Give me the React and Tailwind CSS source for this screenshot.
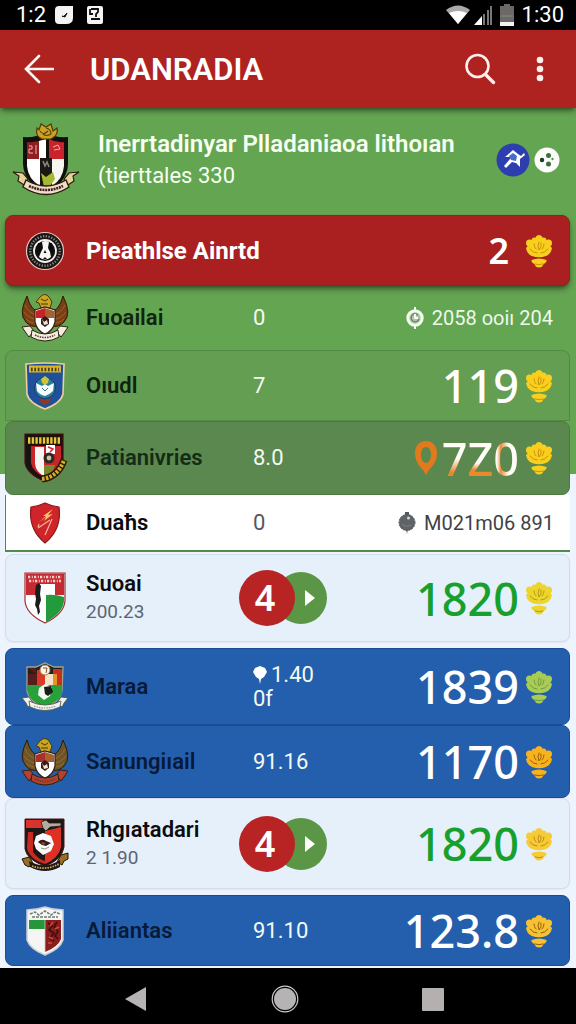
import clsx from "clsx"

/* ---------- small icons ---------- */

function Trophy({ fill = "#f9cf1d", line = "#c98f0c" }) {
  return (
    <svg viewBox="0 0 28 34" className="h-[34px] w-7 shrink-0" fill={fill} strokeLinejoin="round" strokeLinecap="round">
      <path d="M1 14q2-3 5-2 0-5 4-5 0-6 4-6t4 6q4 0 4 5 3-1 5 2-1 6-6 8-7 2.500-14 0-5-2-6-8z" />
      <circle cx="4.500" cy="9" r="3.500" />
      <circle cx="23.500" cy="9" r="3.500" />
      <circle cx="9.500" cy="6.500" r="3" />
      <circle cx="18.500" cy="6.500" r="3" />
      <path d="M6.500 26q7.500-3 15 0 .5 2.500-3 4-1 3.500-4.500 3.500T9.500 30Q6 28.500 6.500 26z" />
      <path d="M5 15q3 4 7 4M23 15q-3 4-7 4M14 8q-2 4 0 8 3-3 2-7M9 10q0 3 2 5M19 10q0 3-2 5M10 30q4 1.500 8 0" fill="none" stroke={line} strokeWidth="1" />
    </svg>
  )
}

function MetaIcon({ dark }) {
  if (dark) {
    return (
      <svg viewBox="0 0 18 22" className="h-[22px] w-[18px]">
        <path d="M7 0h4v4H7zM8 17h2l-1 5z" fill="#55595c" />
        <circle cx="9" cy="10.500" r="8" fill="#5f6366" stroke="#4c5053" strokeWidth="1" strokeDasharray="2 1" />
        <circle cx="10.500" cy="6" r="1.500" fill="#d5d7d8" />
        <path d="M4 12q4 4 9 1" stroke="#7d8184" fill="none" />
      </svg>
    )
  }
  return (
    <svg viewBox="0 0 18 22" className="h-[22px] w-[18px]">
      <path d="M8 0h2v3H8zM8 19h2v3H8z" fill="#f4fbf1" />
      <circle cx="9" cy="11" r="7.200" fill="#a9c8a0" stroke="#f4fbf1" strokeWidth="3" />
      <path d="M12 8A4 4 0 1 0 13 12" fill="none" stroke="#68805f" strokeWidth="1.200" />
      <path d="M9 7v4h3" fill="none" stroke="#fff" strokeWidth="1.800" />
    </svg>
  )
}

function OrangePin() {
  return (
    <svg viewBox="0 0 24 36" className="mr-1 h-9 w-6">
      <path fillRule="evenodd" fill="#e07a1c" d="M12 1c7 0 11 5 11 12 0 8-4 13-8 17l-3 5-3-5C5 26 1 21 1 13 1 6 5 1 12 1zm0 6c-3 0-5 3-5 7.500s2 8.500 5 8.500 5-4 5-8.500S15 7 12 7z" />
    </svg>
  )
}

/* ---------- crests ---------- */

function LeagueCrest() {
  return (
    <svg viewBox="0 0 68 76" className="h-[76px] w-[68px]">
      <path d="M11 15q12 1 22-4 11 5 23 4v27q-1 20-22 27-22-7-23-27z" fill="#120f0f" />
      <path d="M15 20q9 1 18-3v20H15z" fill="#8f1f22" />
      <path d="M27 19l7-2v20h-7z" fill="#fff" />
      <path d="M37 17q8 4 15 3v17H37z" fill="#c9232b" />
      <path d="M15 37h13v27q-12-7-13-20z" fill="#fff" />
      <path d="M40 37h12v7q-1 13-12 20z" fill="#f6f4ef" />
      <path d="M28 36h12v28l-6 3-6-3z" fill="#1b1714" />
      <path d="M29 51l5 4 7-5 2 7-5 7-6 1z" fill="#a5b733" />
      <path d="M31 39l2 5 2-4 2 5" stroke="#8d8a85" strokeWidth="1.500" fill="none" />
      <path d="M17 24h3v3h-3v4h4m3-8v9m17-7l5-2 2 4-6 1" stroke="#f2b0a8" strokeWidth="1" fill="none" />
      <path d="M25 6q-2 8 5 11h9q8-4 6-11l-4 3-2-7-5 3-5-3-2 6z" fill="#c9a227" stroke="#4f3c07" strokeWidth="1.200" />
      <path d="M28 9q3 5 8 0M34 6q5 1 5 6-5 3-8 0" stroke="#5b4508" strokeWidth="1.200" fill="none" />
      <path d="M1 50l10 1 5 6-4 6-6-4 1-5z" fill="#e5d29b" stroke="#2a1c0c" strokeWidth="1.200" />
      <path d="M67 50l-10 1-5 6 4 6 6-4-1-5z" fill="#e5d29b" stroke="#2a1c0c" strokeWidth="1.200" />
      <path d="M14 58q20 12 40 0l3 7q-23 15-46 0z" fill="#f0dcc9" stroke="#2a1c0c" strokeWidth="1.400" />
      <path d="M17 64q17 8 34 0" stroke="#3b2320" strokeWidth="2.600" strokeDasharray="2 .8" fill="none" />
    </svg>
  )
}

function RoundCrest() {
  return (
    <svg viewBox="0 0 40 40" className="h-10 w-10">
      <circle cx="20" cy="20" r="18.500" fill="#191616" stroke="#e9c7bd" strokeWidth="1.200" />
      <circle cx="20" cy="20" r="14.800" fill="none" stroke="#8b8582" strokeWidth="2.400" strokeDasharray="1.300 1.500" />
      <circle cx="20" cy="20" r="11" fill="#111" stroke="#f2efed" strokeWidth="1.800" />
      <path d="M17 11q4-2 7 0l-1 6 2 4 1 5q-6 5-12 0l2-5 2-4z" fill="#f7f6f5" />
      <path d="M13 12l4 0-1 8-4 2zM27 12l-3 0 1 8 3 2z" fill="#0d0c0c" />
      <path d="M20 19l1.500 3h-3zM20 26l2 2h-4z" fill="#141212" />
    </svg>
  )
}

function EagleCrest({ wing = "#7a3f16", ribbon = "#f1ecdf", upper = "#c52328" }) {
  return (
    <svg viewBox="0 0 48 48" className="h-12 w-12">
      <path d="M6 2Q-3 20 5 28q5 6 14 4l1-14Q10 18 6 2zM42 2q9 18 1 26-5 6-14 4l-1-14Q38 18 42 2z" fill={wing} stroke="#2d1a08" strokeWidth="1" />
      <path d="M4 11q3 8 14 11M3 18q5 7 15 8M5 25q5 5 13 4M44 11q-3 8-14 11M45 18q-5 7-15 8M43 25q-5 5-13 4" stroke="#b0742c" strokeWidth=".7" fill="none" />
      <path d="M19 3q5-5 9 0l3 5-2 6h-9l-2-5-3-1z" fill="#c9a524" stroke="#4a3708" strokeWidth="1" />
      <path d="M20 5l4 2 3-2M20 10h7" stroke="#4a3708" strokeWidth="1" fill="none" />
      <path d="M14 16l10-3 10 3v12q-2 9-10 12-8-3-10-12z" fill="#fff" stroke="#38220e" strokeWidth="1.200" />
      <path d="M15 17l9-3v10h-9z" fill={upper} />
      <path d="M24 14l9 3v7h-9z" fill="#a5622e" />
      <path d="M20 25l4-3 4 3v5l-4 3-4-3z" fill="#3a1c16" />
      <path d="M21 25l2 3 3-2 1 4-4 1z" fill="#eee7d5" />
      <path d="M1 33l8-1 4 5-5 6-3-4zM47 33l-8-1-4 5 5 6 3-4z" fill={ribbon} stroke="#332014" strokeWidth="1" />
      <path d="M11 36q13 8 26 0l1 7q-14 8-28 0z" fill={ribbon} stroke="#332014" strokeWidth="1" />
      <path d="M14 41q10 5 20 0" stroke="#55432f" strokeWidth="1.600" strokeDasharray="1.500 1" fill="none" />
    </svg>
  )
}

function BlueCrest() {
  return (
    <svg viewBox="0 0 40 48" className="h-12 w-10">
      <path d="M1 2q19-2 38 0l-1 30q-2 9-18 15Q4 41 2 32z" fill="#20509b" stroke="#ecd0a0" strokeWidth="1.600" />
      <path d="M4 3.500h32v7H4z" fill="#d8b42a" />
      <path d="M6 7.500h28" stroke="#4a3b0d" strokeWidth="3.500" strokeDasharray="1.600 1.800" />
      <circle cx="20" cy="26" r="10.500" fill="#2a7fa0" stroke="#173a70" />
      <path d="M11 21l6 3 3-2 3 2 6-3-1 8q-4 4-8 5-5-1-8-5z" fill="#f7fbfd" />
      <path d="M16 17l4-3 4 3-1 4-3 2-3-2z" fill="#c9c63c" />
      <path d="M17 26l3 3 3-3" stroke="#2a7fa0" strokeWidth="1" fill="none" />
      <path d="M14 36l6 2 6-2-2 5-4 2-4-2z" fill="#8c3a24" />
    </svg>
  )
}

function BlackRedCrest() {
  return (
    <svg viewBox="0 0 46 50" className="h-[50px] w-[46px]">
      <path d="M3 1h38v26q-2 14-19 21Q5 41 3 30z" fill="#1a1111" stroke="#4b0f0f" strokeWidth="1.200" />
      <path d="M6 7.500h33" stroke="#e6c833" strokeWidth="6.500" strokeDasharray="2.400 1.300" />
      <path d="M9 13h30v16q-3 10-17 15Q10 38 9 30z" fill="#c7252b" />
      <path d="M13 14h9v29q-8-4-9-12z" fill="#f8f4f1" />
      <path d="M24 12h9v9h-9z" fill="#fff" />
      <path d="M26 14l5 2-3 3" stroke="#c7252b" strokeWidth="1.500" fill="none" />
      <circle cx="27" cy="25" r="5.500" fill="#2c2a20" />
      <circle cx="27" cy="25" r="2.400" fill="#c9c1aa" />
      <path d="M22 32h11l-3 9-8 3z" fill="#78852c" />
      <path d="M20 46q16-2 22-19" stroke="#2a1c08" strokeWidth="7" fill="none" />
      <path d="M20 46q16-2 22-19" stroke="#d9ad2c" strokeWidth="4" strokeDasharray="2.500 1.400" fill="none" />
    </svg>
  )
}

function RedShield() {
  return (
    <svg viewBox="0 0 32 42" className="h-[42px] w-8">
      <path d="M2 5Q10 4 16 1q6 3 14 4 3 22-14 36Q-1 27 2 5z" fill="#cf2429" stroke="#8a1a1d" strokeWidth="1.200" />
      <path d="M9 21l8-7-3 0 10-7-5 6 5-1-9 7 2-4z" fill="#f2c46a" />
      <path d="M9 26l12-8M23 17l-7 16M10 22l-1 3" stroke="#f6b69b" strokeWidth="1.200" />
    </svg>
  )
}

function GreenWhiteCrest() {
  return (
    <svg viewBox="0 0 42 52" className="h-[52px] w-[42px]">
      <path d="M1 1h40v28q-1 13-20 22Q2 42 1 29z" fill="#fdfdfd" stroke="#a02c33" strokeWidth="1.200" />
      <path d="M2 1.600h38V12H2zM2 12h10v11H2zM31 12h9v11h-9z" fill="#c62a31" />
      <path d="M4 5h34M5 9h32" stroke="#f5cfcb" strokeWidth="2.600" strokeDasharray="2.200 1.600 1 1.200" />
      <path d="M22 23q9-1 18 2v4q-1 12-18 21z" fill="#239a3b" />
      <path d="M12 12h3v11h-3z" fill="#c62a31" />
      <path d="M12 13l3-2 2 3-1 8 1 6-2 6 1 6-2 3-1-6-2-4 1-6-1-6z" fill="#1c1b1b" />
    </svg>
  )
}

function QuarteredCrest() {
  return (
    <svg viewBox="0 0 48 50" className="h-[50px] w-12">
      <path d="M6 5l9 0 9-4 9 4 9 0-1 24q-3 12-17 16Q9 41 6 29z" fill="#232019" stroke="#a2a48f" strokeWidth="1.300" />
      <path d="M7 12h9v11H7zM7 6h8v6z" fill="#571c1b" />
      <path d="M16 8h8v15h-8z" fill="#d93a28" />
      <path d="M24 12h8v11h-8z" fill="#f2e3c8" />
      <path d="M32 7h9v16h-9z" fill="#c82e1f" />
      <path d="M32 12h4v11h-4z" fill="#e4961f" />
      <path d="M7 23h34v8q-4 10-17 13Q10 40 7 31z" fill="#27a13a" />
      <path d="M18 26l6-4 7 3-2 9-6 4-6-5z" fill="#f4f8f0" />
      <path d="M23 25l7-1 2 6-5 4-3-2z" fill="#191d17" />
      <circle cx="24" cy="8" r="5" fill="#f7f5ef" stroke="#ab7e42" />
      <path d="M22 6h4l-1 5" stroke="#8a4d21" fill="none" />
      <path d="M1 36l7-1 4 6-5 4-2-4zM47 36l-7-1-4 6 5 4 2-4z" fill="#f1f2ee" stroke="#4c5348" strokeWidth=".8" />
      <path d="M8 39q16 8 32 0l-1 6q-15 7-30 0z" fill="#f1f2ee" stroke="#4c5348" strokeWidth=".8" />
      <path d="M13 44q11 4 22 0" stroke="#8d928a" strokeWidth="1.200" strokeDasharray="1.500 1" fill="none" />
    </svg>
  )
}

function WolfCrest() {
  return (
    <svg viewBox="0 0 48 54" className="h-[54px] w-12">
      <path d="M4 2h39v28q-2 13-19 19Q6 43 4 32z" fill="#1d1716" stroke="#4a1411" strokeWidth="1" />
      <path d="M5 3h17v8H5z" fill="#d8332c" />
      <path d="M24 14l16-4v20q-2 11-16 17z" fill="#de3023" />
      <path d="M7 15h5v20q5 7 12 9v3Q8 42 6 31z" fill="#c82a22" />
      <path d="M20 5l5-2 3 3 12 0v3l-11 1-4 4-3-3z" fill="#b5ab9d" stroke="#27201d" strokeWidth=".8" />
      <path d="M15 19l7-3 8 3 3 8-3 7-8 4-7-6-2-6z" fill="#fbfafa" />
      <path d="M17 25q4-4 8-1l5 2-5 3-4-1z" fill="#2b1d1b" />
      <path d="M20 31l4 1 4-2" stroke="#9a9390" fill="none" />
      <path d="M20 25l5 1-3 2z" fill="#d8332c" />
      <path d="M1 42l7-2 4 6-4 4-4-2zM47 36l-7 2-4 7 5 3 2-4 4-2z" fill="#9a6e22" stroke="#1f150b" strokeWidth="1" />
      <path d="M8 44q16 9 31-1l0 7q-15 8-30 0z" fill="#211713" />
      <path d="M11 49q14 5 27-2" stroke="#c9a352" strokeWidth="1.800" strokeDasharray="1.600 1" fill="none" />
    </svg>
  )
}

function TricolorCrest() {
  return (
    <svg viewBox="0 0 40 50" className="h-[50px] w-10">
      <path d="M2 4q9 0 18-3 9 3 18 3v30q-3 9-18 15Q5 43 2 34z" fill="#f5f6f4" stroke="#c9cfd3" strokeWidth="1.500" />
      <path d="M5 8l5-2 4 3 6-4 6 4 4-3 5 2M7 11h26" stroke="#6d7b76" strokeWidth="1.500" strokeDasharray="3 1" fill="none" />
      <path d="M4 14h16v9H4z" fill="#23973a" />
      <path d="M20 14h16v19q-3 8-16 13z" fill="#8c1d1c" />
      <path d="M23 17l4 3-3 4 5 3-4 5 4 3M32 16l-3 5 4 4-3 5 3 3" stroke="#3b100e" strokeWidth="1.600" fill="none" />
      <path d="M28 16l-3 4m9 1l-4 2m-6 8l4 2m-5 4l4 0" stroke="#d44a3b" strokeWidth="1.400" />
      <path d="M20 14v32" stroke="#c5cbc7" strokeWidth=".8" />
    </svg>
  )
}

/* ---------- list data ---------- */

const tones = {
  red: "rounded-lg border border-[#96201c] bg-[#aa1f20] text-white shadow-md shadow-black/40",
  plain: "border-x border-transparent text-[#10230f]",
  outline: "rounded-t-lg border border-[#528a45] bg-[#639e53] text-[#10230f]",
  moss: "rounded-lg border border-[#4b7a41] bg-[#5a884f] text-[#142b16]",
  white: "border-b-2 border-l border-[#528a4a] bg-white text-[#0c0c0e]",
  pale: "rounded-lg border border-[#d3dce8] bg-[#e6f0fb] text-[#0c0c0e] shadow-xs",
  blue: "rounded-lg border border-[#1b4c93] bg-[#245fae] text-[#071a38]",
}

const rows = [
  { name: "Pieathlse Ainrtd", tone: "red", size: "min-h-[71px]", crest: <RoundCrest />, score: "2", small: true, trophy: {} },
  { name: "Fuoailai", tone: "plain", size: "min-h-16", crest: <EagleCrest />, mid: "0", meta: "2058 ooiı 204" },
  { name: "Oıudl", tone: "outline", size: "min-h-[71px]", crest: <BlueCrest />, mid: "7", score: "119", trophy: {} },
  { name: "Patianivries", tone: "moss", size: "min-h-[74px]", crest: <BlackRedCrest />, mid: "8.0", score: "7Z0", pin: true, trophy: {} },
  { name: "Duaħs", tone: "white", size: "min-h-[57px]", crest: <RedShield />, mid: "0", meta: "M021m06 891", darkMeta: true },
  { name: "Suoai", sub: "200.23", tone: "pale", size: "mt-0.5 min-h-[88px]", crest: <GreenWhiteCrest />, badge: "4", score: "1820", trophy: { fill: "#ecd52c", line: "#b59a14" } },
  { name: "Maraa", tone: "blue", size: "mt-1.5 min-h-[77px]", crest: <QuarteredCrest />, mid: "1.40", midSub: "0f", score: "1839", trophy: { fill: "#a9cc55", line: "#6f9a45" } },
  { name: "Sanungiıail", tone: "blue", size: "min-h-[73px]", crest: <EagleCrest wing="#6d5527" ribbon="#b5402e" upper="#a8322b" />, mid: "91.16", score: "1170", trophy: { fill: "#f9b21b", line: "#94600c" } },
  { name: "Rhgıatadari", sub: "2 1.90", tone: "pale", size: "min-h-[91px]", crest: <WolfCrest />, badge: "4", score: "1820", trophy: { fill: "#f6cb36", line: "#bd8c17" } },
  { name: "Aliiantas", tone: "blue", size: "mt-1.5 min-h-[71px]", crest: <TricolorCrest />, mid: "91.10", score: "123.8", trophy: { fill: "#f8c131", line: "#94600c" } },
]

function Badge({ value }) {
  return (
    <div className="-ml-3.5 flex items-center">
      <span className="z-10 flex h-14 w-14 items-center justify-center rounded-full bg-[#b82424] pr-1 font-['Noto_Sans',sans-serif] text-4xl font-semibold text-white">
        {value}
      </span>
      <button type="button" aria-label="Play" className="-ml-5 flex h-13 w-13 items-center justify-end rounded-full bg-[#5a9645] pr-3">
        <svg viewBox="0 0 10 16" className="h-4 w-2.5" fill="#fff">
          <path d="M0 0l10 8-10 8z" />
        </svg>
      </button>
    </div>
  )
}

function Score({ row }) {
  if (row.pin) {
    return (
      <span className="flex items-center">
        <OrangePin />
        <span className="bg-linear-to-b from-[#fffdf5] from-50% to-[#e88a2c] to-80% bg-clip-text text-transparent">7</span>
        <span className="bg-linear-to-b from-[#fffdf5] from-60% to-[#e88a2c] to-75% bg-clip-text text-transparent">Z</span>
        <span className="bg-linear-to-r from-[#fffdf5] from-15% via-[#e88a2c] via-30% to-[#fffdf5] to-60% bg-clip-text text-transparent">0</span>
      </span>
    )
  }
  return <span>{row.score}</span>
}

function TeamRow({ row }) {
  const dark = row.tone === "white"

  return (
    <li className={clsx("grid grid-cols-[80px_167px_1fr_auto] items-center pr-4", tones[row.tone], row.size)}>
      <div className="flex w-[77px] justify-center">{row.crest}</div>

      <div>
        <h2 className={clsx("whitespace-nowrap leading-7", row.tone === "red" ? "text-2xl font-bold" : "text-[22px] font-semibold")}>
          {row.name}
        </h2>
        {row.sub && <p className="text-[19px] leading-7 text-[#5d6470]">{row.sub}</p>}
      </div>

      <div className={clsx("text-[22px] leading-6", dark ? "text-[#55585c]" : "text-[#f3faf4]")}>
        {row.badge && <Badge value={row.badge} />}
        {row.mid && (
          <p className="flex items-center gap-1">
            {row.midSub && (
              <svg viewBox="0 0 14 18" className="h-[18px] w-3.5" fill="#fff">
                <path d="M7 0l5 2 2 4-3 5-3 2-1 5-1-5-3-2-3-5 2-4z" />
              </svg>
            )}
            {row.mid}
          </p>
        )}
        {row.midSub && <p>{row.midSub}</p>}
      </div>

      {row.meta ? (
        <div className={clsx("flex items-center gap-2 text-xl", dark ? "text-[#3f4245]" : "text-[#eef8ea]")}>
          <MetaIcon dark={row.darkMeta} />
          <span>{row.meta}</span>
        </div>
      ) : (
        <div
          className={clsx(
            "flex items-center font-['Noto_Sans',sans-serif] leading-none",
            row.small ? "gap-4 text-4xl font-semibold" : "gap-1.5 text-[45px] font-medium",
            row.tone === "pale" ? "text-[#17a02e]" : "text-white"
          )}
        >
          <Score row={row} />
          <Trophy {...row.trophy} />
        </div>
      )}
    </li>
  )
}

function StatusBar() {
  return (
    <div className="flex h-[30px] items-center bg-black pl-4 pr-3 text-[22px] leading-none text-white">
      <span>1:2</span>
      <svg viewBox="0 0 20 20" className="ml-2 h-5 w-5">
        <path d="M5 1h14v12q0 6-7 6H5q-4 0-4-4V5q0-4 4-4z" fill="#f4f4f4" />
        <path d="M8 11q1 2 5-3l-2 4z" fill="#111" stroke="#111" />
      </svg>
      <svg viewBox="0 0 18 20" className="ml-3 h-5 w-[18px]">
        <rect x="1" y="1" width="16" height="18" rx="2" fill="#f4f4f4" />
        <path d="M5 4h7v3l-2 2v3M4 4v5h3M5 14h9" fill="none" stroke="#111" strokeWidth="1.800" />
      </svg>

      <div className="ml-auto flex items-center gap-1">
        <svg viewBox="0 0 24 20" className="h-5 w-6">
          <path d="M0 5q12-9 24 0L12 19z" fill="#a9a9a9" />
          <path d="M3 8q9-4 18 0l-9 11z" fill="#fff" />
        </svg>
        <svg viewBox="0 0 18 20" className="h-5 w-[18px]">
          <path d="M0 20L8 11v9z" fill="#fff" />
          <path d="M9 9h2v11H9zM13 5h2v15h-2zM16 1h2v19h-2z" fill="#777" />
        </svg>
        <svg viewBox="0 0 14 22" className="ml-1 h-[22px] w-3.5">
          <path d="M4 0h6v2h4v20H0V2h4z" fill="#6c6866" />
          <path d="M0 18h14v4H0z" fill="#f2f2f2" />
          <path d="M1 12h12" stroke="#8d8986" />
        </svg>
        <span className="ml-1">1:30</span>
      </div>
    </div>
  )
}

function Toolbar() {
  return (
    <header className="z-10 flex h-[78px] items-center bg-[#ae2220] pl-6 pr-5 text-white shadow-md shadow-black/40">
      <button type="button" aria-label="Back">
        <svg viewBox="0 0 30 30" className="h-[30px] w-[30px]" fill="none" stroke="#fff5f2" strokeWidth="2.600" strokeLinecap="round">
          <path d="M29 15H2M15 2L2 15l13 13" />
        </svg>
      </button>
      <h1 className="ml-9 text-[31px] font-semibold leading-none">UDANRADIA</h1>
      <button type="button" aria-label="Search" className="ml-auto">
        <svg viewBox="0 0 32 32" className="h-8 w-8" fill="none" stroke="#fff0ee" strokeWidth="2.600" strokeLinecap="round">
          <circle cx="13.500" cy="13" r="11" />
          <path d="M21.500 21.500L29.500 29.500" strokeWidth="3.400" />
        </svg>
      </button>
      <button type="button" aria-label="More options" className="ml-7">
        <svg viewBox="0 0 32 28" className="h-7 w-8" fill="#fff0ee">
          <circle cx="16" cy="5" r="3.300" />
          <circle cx="16" cy="14" r="3.300" />
          <circle cx="16" cy="23" r="3.300" />
        </svg>
      </button>
    </header>
  )
}

function LeagueHeader() {
  return (
    <section className="flex min-h-[107px] items-center pb-1 pl-3 pr-4 text-[#f6fff2]">
      <LeagueCrest />
      <div className="ml-[18px]">
        <h2 className="whitespace-nowrap text-2xl font-semibold leading-8">Inerrtadinyar Plladaniaoa lithoıan</h2>
        <p className="text-[22px] leading-8">(tierttales 330</p>
      </div>
      <div className="ml-auto flex items-center gap-1">
        <svg viewBox="0 0 34 34" className="h-[34px] w-[34px]">
          <circle cx="17" cy="17" r="16.500" fill="#2d3fae" />
          <path d="M9 14l8-7 5 4 3 2 3-3 1 2-5 4 0 8-4-4-4-1-6 6-2-2 6-7 1-2z" fill="#fff" />
          <path d="M13 13l4-3 4 3-1 5-5-1z" fill="#4a6cc4" />
        </svg>
        <svg viewBox="0 0 26 26" className="h-[26px] w-[26px]">
          <circle cx="13" cy="13" r="12.500" fill="#fdfdfb" />
          <circle cx="8" cy="13" r="2.200" fill="#1c3a20" />
          <circle cx="14.500" cy="8.500" r="2.500" fill="#3e7040" />
          <circle cx="14.500" cy="17" r="2.500" fill="#3e7040" />
          <circle cx="18.500" cy="12" r="1.200" fill="#5d9150" />
        </svg>
      </div>
    </section>
  )
}

function NavBar() {
  return (
    <nav className="flex h-14 items-center justify-center gap-[122px] bg-black pr-2 pt-1.5">
      <button type="button" aria-label="Back">
        <svg viewBox="0 0 26 26" className="h-[26px] w-[26px]" fill="#b5b3b3">
          <path d="M23 1v24L2 13z" />
        </svg>
      </button>
      <button type="button" aria-label="Home">
        <svg viewBox="0 0 28 28" className="h-7 w-7">
          <circle cx="14" cy="14" r="12.800" fill="none" stroke="#c9c9c9" strokeWidth="1.200" />
          <circle cx="14" cy="14" r="11" fill="#b5b3b3" />
        </svg>
      </button>
      <button type="button" aria-label="Recent apps">
        <svg viewBox="0 0 24 24" className="h-6 w-6" fill="#b5b0b0">
          <rect x="1" y="1" width="22" height="23" rx="1" />
        </svg>
      </button>
    </nav>
  )
}

export default function App() {
  return (
    <div className="flex min-h-screen w-full flex-col bg-[#edf4fd] font-[Roboto,sans-serif]">
      <StatusBar />
      <Toolbar />

      {/* green backdrop ends part way down the list */}
      <main className="flex-1 bg-[linear-gradient(#64a551_366px,#edf4fd_366px)]">
        <LeagueHeader />
        <ul className="ml-[5px] mr-1.5 pb-0.5">
          {rows.map((row, i) => (
            <TeamRow key={i} row={row} />
          ))}
        </ul>
      </main>

      <NavBar />
    </div>
  )
}
